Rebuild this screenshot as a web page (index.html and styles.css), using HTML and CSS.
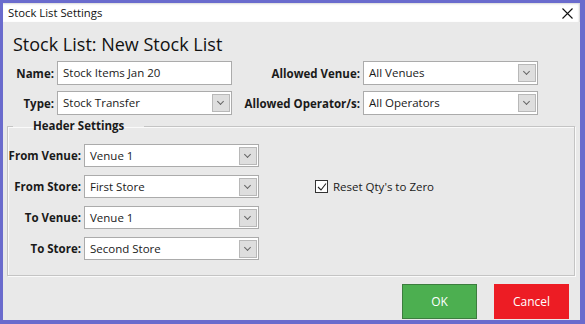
FILE: index.html
```html
<!DOCTYPE html>
<html lang="en">
<head>
    <meta charset="UTF-8">
    <meta name="viewport" content="width=device-width, initial-scale=1.0">
    <title>Stock List Settings</title>
    <link rel="stylesheet" href="styles.css">
</head>
<body>
    <div class="window">
        <div class="titlebar">
            <span class="title">Stock List Settings</span>
            <span class="close">
                <svg width="11" height="11" viewBox="0 0 11 11">
                    <path d="M0.5 0.5 L10.5 10.5 M10.5 0.5 L0.5 10.5" stroke="#111" stroke-width="1.1" fill="none"/>
                </svg>
            </span>
        </div>

        <div class="content">
            <h1 class="heading">Stock List: New Stock List</h1>

            <div class="top-grid">
                <label class="label">Name:</label>
                <div class="field">Stock Items Jan 20</div>
                <label class="label">Allowed Venue:</label>
                <div class="field select">All Venues<span class="arrow"></span></div>

                <label class="label">Type:</label>
                <div class="field select">Stock Transfer<span class="arrow"></span></div>
                <label class="label">Allowed Operator/s:</label>
                <div class="field select">All Operators<span class="arrow"></span></div>
            </div>

            <fieldset class="group">
                <legend class="group-title">Header Settings</legend>
                <div class="group-grid">
                    <label class="label">From Venue:</label>
                    <div class="field select">Venue 1<span class="arrow"></span></div>
                    <div></div>

                    <label class="label">From Store:</label>
                    <div class="field select">First Store<span class="arrow"></span></div>
                    <div class="check-row">
                        <span class="checkbox">
                            <svg width="10" height="10" viewBox="0 0 10 10">
                                <path d="M1 5 L4 8 L9 1.5" stroke="#222" stroke-width="1.1" fill="none"/>
                            </svg>
                        </span>
                        <span class="check-label">Reset Qty's to Zero</span>
                    </div>

                    <label class="label">To Venue:</label>
                    <div class="field select">Venue 1<span class="arrow"></span></div>
                    <div></div>

                    <label class="label">To Store:</label>
                    <div class="field select">Second Store<span class="arrow"></span></div>
                    <div></div>
                </div>
            </fieldset>

            <div class="actions">
                <button class="btn ok">OK</button>
                <button class="btn cancel">Cancel</button>
            </div>
        </div>
    </div>
</body>
</html>
```

FILE: styles.css
```css
body {
    margin: 0;
    font-family: "Open Sans", "Noto Sans", sans-serif;
    color: #1a1a1a;
}

.window {
    width: 585px;
    height: 324px;
    box-sizing: border-box;
    border-style: solid;
    border-color: #6a6bcd;
    border-width: 3px 5px 4px 3px;
    background-color: #e9e9e9;
    display: flex;
    flex-direction: column;
}

.titlebar {
    height: 19px;
    background-color: #fff;
    display: flex;
    align-items: center;
    justify-content: space-between;
    padding: 0 7px 0 5px;
    box-shadow: inset 0 2px 2px -1px #d8d8d8, inset -2px 0 2px -1px #d0d0d0;
}

.title {
    font-size: 11.3px;
    color: #111;
}

.close {
    display: flex;
    margin-top: 1px;
}

.content {
    flex: 1;
    display: flex;
    flex-direction: column;
}

.heading {
    font-size: 18px;
    font-weight: normal;
    line-height: 24px;
    margin: 10px 0 0 10px;
    color: #111;
}

.top-grid {
    display: grid;
    grid-template-columns: 51px 175px 125px 175px;
    grid-auto-rows: 24px;
    column-gap: 3px;
    row-gap: 6px;
    margin-top: 5px;
}

.label {
    font-size: 11.5px;
    font-weight: bold;
    text-align: right;
    align-self: center;
    white-space: nowrap;
    color: #1a1a1a;
}

.field {
    position: relative;
    box-sizing: border-box;
    height: 24px;
    background-color: #fff;
    border: 1px solid #ababab;
    font-size: 11.5px;
    line-height: 22px;
    padding-left: 5px;
    color: #1a1a1a;
}

.arrow {
    position: absolute;
    top: 2px;
    right: 1px;
    width: 16px;
    height: 16px;
    background-color: #dedede;
    border: 1px solid #b8b8b8;
}

.arrow::after {
    content: "";
    position: absolute;
    left: 5px;
    top: 4px;
    width: 4px;
    height: 4px;
    border-right: 1px solid #666;
    border-bottom: 1px solid #666;
    transform: rotate(45deg);
}

.group {
    margin: 3px 5px 0 4px;
    padding: 10px 0 15px 0;
    border: 1px solid #c4c4c4;
    box-shadow: inset 1px 1px 0 #fafafa, 1px 1px 0 #fafafa;
}

.group-title {
    font-size: 11.5px;
    font-weight: bold;
    line-height: 16px;
    margin-left: 5px;
    padding: 0 20px;
    color: #1a1a1a;
}

.group-grid {
    display: grid;
    grid-template-columns: 73px 175px auto;
    grid-auto-rows: 23px;
    column-gap: 3px;
    row-gap: 8px;
}

.group-grid .field {
    height: 23px;
    line-height: 21px;
}

.check-row {
    display: flex;
    align-items: center;
    gap: 5px;
    margin-left: 53px;
}

.checkbox {
    box-sizing: border-box;
    width: 13px;
    height: 13px;
    border: 1px solid #333;
    background-color: #fff;
    display: flex;
    align-items: center;
    justify-content: center;
}

.check-label {
    font-size: 11.5px;
    color: #1a1a1a;
}

.actions {
    display: flex;
    justify-content: flex-end;
    gap: 17px;
    margin-top: 8px;
    padding-right: 11px;
}

.btn {
    width: 75px;
    height: 35px;
    font-family: "Open Sans", "Noto Sans", sans-serif;
    font-size: 12px;
    color: #fff;
    border: 1px solid transparent;
    padding: 0;
}

.btn.ok {
    background-color: #4caf50;
    border-color: #3c7d3e;
}

.btn.cancel {
    background-color: #ed1c24;
    border-color: #ed1c24;
}
```
